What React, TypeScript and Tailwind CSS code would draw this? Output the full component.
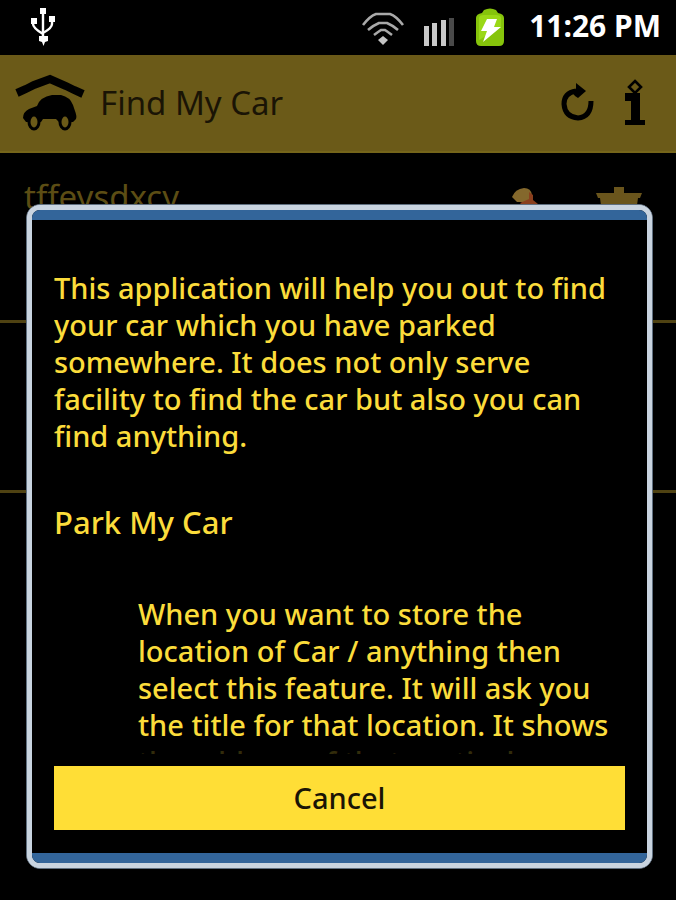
import React from "react";
import clsx from "clsx";

interface ParkedSpot {
  id: number;
  title: string;
}

const spots: ParkedSpot[] = [
  { id: 1, title: "tffeysdxcy" },
  { id: 2, title: "" },
];

const UsbIcon = () => (
  <svg viewBox="0 0 26 40" className="h-10 w-[26px]" fill="none" stroke="#fff" strokeWidth="2.4">
    <path d="M13 4v29M3 14v2q0 4 10 10M22 12v4q0 4-9 9" />
    <path d="M10 0h6v6h-6zM1 10h6v6H1zM19 8h6v6h-6z" fill="#fff" stroke="none" />
    <path d="M9 28h9v5l-3 1-1.500 4-1.500-4-3-1z" fill="#fff" stroke="none" />
  </svg>
);

const WifiIcon = () => (
  <svg viewBox="0 0 44 34" className="h-[34px] w-11" fill="none" stroke="#a9a9a9" strokeWidth="2.6">
    <path d="M2 14Q9 5 15 3h14q6 2 13 11" />
    <path d="M7 19q6-5 11-7h8q5 2 11 7" />
    <path d="M13 24q4-3 7-5h4q3 2 7 5" />
    <path d="M22 25l5 4-5 5-5-5z" fill="#c4c4c4" stroke="none" />
  </svg>
);

const SignalIcon = () => (
  <svg viewBox="0 0 32 30" className="h-[30px] w-8">
    <path d="M1 9h5v20H1zM9 6h5v23H9zM18 3h5v26h-5z" fill="#c9c9c9" />
    <path d="M26 1h5v28h-5z" fill="#4a4a4a" />
  </svg>
);

const BatteryIcon = () => (
  <svg viewBox="0 0 30 40" className="h-10 w-[30px]">
    <path d="M9 2q6-3 12 0l2 3q6 1 6 5v23q0 5-5 5H6q-5 0-5-5V10q0-4 6-5z" fill="#86c40b" />
    <path d="M4 10q0-3 5-3h12q5 0 5 3v9L4 32z" fill="#9ad816" />
    <path d="M12 11h10l-3 8h7L8 34l4-11H6z" fill="#fff" />
  </svg>
);

const ShelteredCar = () => (
  <svg viewBox="0 0 72 58" className="h-[58px] w-[72px]">
    <path d="M3 19l9-4 8-4 16-6 16 7 8 4 9 4" fill="none" stroke="#000" strokeWidth="8" />
    <path
      d="M9 44q0-6 6-9l8-3q3-9 15-11h9q9 2 12 10l2 6q2 5 1 8l-3 3H45l-3-3H29l-2 3H12z"
      fill="#000"
    />
    <ellipse cx="20" cy="48" rx="5" ry="7" fill="#6b5a18" stroke="#000" strokeWidth="3" />
    <ellipse cx="51" cy="48" rx="5" ry="7" fill="#6b5a18" stroke="#000" strokeWidth="3" />
  </svg>
);

const RefreshIcon = () => (
  <svg viewBox="0 0 36 40" className="h-10 w-9">
    <path
      d="M16 8Q4 10 4 21q1 13 14 14 13-1 13-17"
      fill="none"
      stroke="#000"
      strokeWidth="5"
    />
    <path d="M16 0l10 8-8 7-3-2-4-5 5-2z" fill="#000" />
  </svg>
);

const InfoIcon = () => (
  <svg viewBox="0 0 24 48" className="h-12 w-6">
    <path d="M11 2l6 6-6 6-6-6z" fill="none" stroke="#000" strokeWidth="2.6" />
    <path d="M1 14h15v27h5v5H1v-5h6V22H1z" fill="#000" />
  </svg>
);

const EditIcon = () => (
  <svg viewBox="0 0 40 40" className="h-10 w-10">
    <path d="M4 10q3-8 12-9 7 0 8 7l-3 7H9z" fill="#84682c" />
    <path d="M21 5l4 3v5l5 4 2 9-6 6L12 16l9-4z" fill="#8a3f1d" />
  </svg>
);

const TrashIcon = () => (
  <svg viewBox="0 0 46 40" className="h-10 w-[46px]" fill="#6a551c">
    <path d="M18 0h10v6H18z" />
    <path d="M0 6h46l-2 5H2zM4 11h38l-4 29H8z" />
  </svg>
);

const StatusBar = () => (
  <div className="flex h-[55px] items-center justify-between bg-black pl-[30px] pr-[15px]">
    <UsbIcon />
    <div className="flex items-center">
      <WifiIcon />
      <div className="ml-[18px] pt-2">
        <SignalIcon />
      </div>
      <div className="ml-5">
        <BatteryIcon />
      </div>
      <span className="ml-6 pb-1 text-[30px] font-bold leading-9 text-white">11:26 PM</span>
    </div>
  </div>
);

const AppHeader = () => (
  <header className="flex h-[98px] items-center border-b-2 border-[#75651a] bg-[#6b5a18] px-3.5">
    <ShelteredCar />
    <h1 className="ml-3.5 flex-1 text-[33px] leading-10 text-[#1a1405]">Find My Car</h1>
    <button type="button" aria-label="Refresh" className="mr-7">
      <RefreshIcon />
    </button>
    <button type="button" aria-label="Info" className="mr-3.5">
      <InfoIcon />
    </button>
  </header>
);

const SpotList = () => (
  <ul>
    {spots.map((spot) => (
      <li
        key={spot.id}
        className={clsx(
          "flex h-[170px] items-start justify-between border-b-3 border-[#4f4212] pl-6 pr-[34px]",
          spot.title && "pt-6"
        )}
      >
        {spot.title && (
          <>
            <span className="text-[33px] leading-10 text-[#5c4d14]">{spot.title}</span>
            <div className="flex gap-12 pt-2.5">
              <button type="button" aria-label="Edit">
                <EditIcon />
              </button>
              <button type="button" aria-label="Delete">
                <TrashIcon />
              </button>
            </div>
          </>
        )}
      </li>
    ))}
  </ul>
);

const HelpDialog = () => (
  <div
    role="dialog"
    aria-label="Help"
    className="flex flex-1 rounded-[14px] border border-[#5f6f80] bg-[#c9d4e0]"
  >
    <div className="flex flex-1 flex-col overflow-hidden rounded-[13px] border-5 border-[#c9d4e0] bg-black">
      <div className="h-2.5 shrink-0 bg-[#33659a]" />
      <div className="flex min-h-0 flex-1 flex-col px-[22px] pb-[23px]">
        <div className="relative h-0 min-h-0 flex-1 overflow-hidden pt-[49px] text-[#fbdc3b]">
          <p className="text-[29px] font-medium leading-[37px]">
            This application will help you out to find your car which you have parked somewhere. It
            does not only serve facility to find the car but also you can find anything.
          </p>
          <h2 className="mt-12 text-[31px] font-medium leading-10">Park My Car</h2>
          <p className="ml-[84px] mt-[53px] text-[29px] font-medium leading-[37px]">
            When you want to store the location of Car / anything then select this feature. It will
            ask you the title for that location. It shows the address of that particular
          </p>
          <div className="absolute inset-x-0 bottom-0 h-3 bg-black/80" />
        </div>
        <button
          type="button"
          className="mt-3 h-16 shrink-0 bg-[#ffde36] text-[29px] font-medium leading-9 text-[#1a1405]"
        >
          Cancel
        </button>
      </div>
      <div className="h-2.5 shrink-0 bg-[#33659a]" />
    </div>
  </div>
);

const App = () => {
  return (
    <div className="relative min-h-screen bg-black font-['Noto_Sans','Open_Sans',sans-serif]">
      <StatusBar />
      <AppHeader />
      <SpotList />
      <div className="absolute inset-0 flex pb-[31px] pl-[26px] pr-[23px] pt-[204px]">
        <HelpDialog />
      </div>
    </div>
  );
};

export default App;
